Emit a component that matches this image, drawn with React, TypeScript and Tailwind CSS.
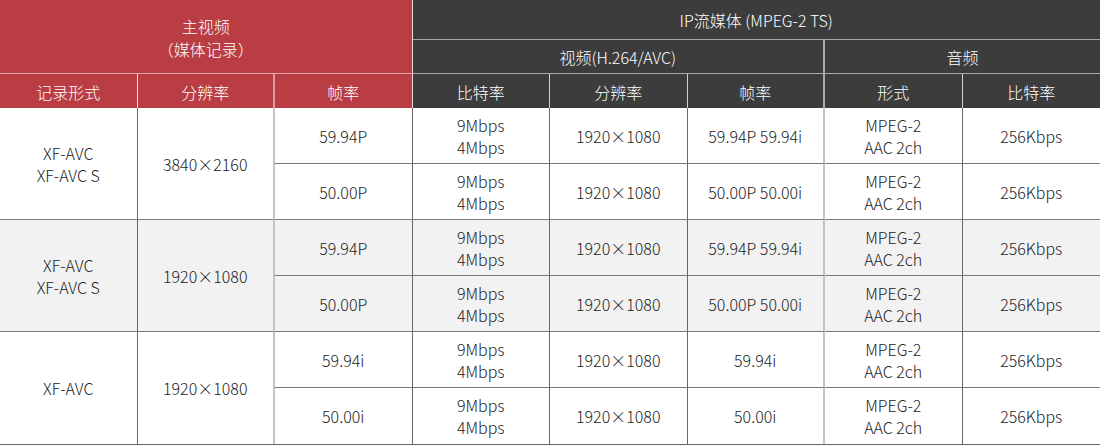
import React from "react";

const RED = "bg-[#b93d43]";
const DARK = "bg-[#3c3c3c]";

type Sub = { fps: string; vfps: string };
type Group = { fmt: string[]; res: string; subs: Sub[]; shaded: boolean };

const GROUPS: Group[] = [
  {
    fmt: ["XF-AVC", "XF-AVC S"],
    res: "3840×2160",
    shaded: false,
    subs: [
      { fps: "59.94P", vfps: "59.94P 59.94i" },
      { fps: "50.00P", vfps: "50.00P 50.00i" },
    ],
  },
  {
    fmt: ["XF-AVC", "XF-AVC S"],
    res: "1920×1080",
    shaded: true,
    subs: [
      { fps: "59.94P", vfps: "59.94P 59.94i" },
      { fps: "50.00P", vfps: "50.00P 50.00i" },
    ],
  },
  {
    fmt: ["XF-AVC"],
    res: "1920×1080",
    shaded: false,
    subs: [
      { fps: "59.94i", vfps: "59.94i" },
      { fps: "50.00i", vfps: "50.00i" },
    ],
  },
];

const cell = "flex flex-col items-center justify-center text-center leading-[22px]";
const head = "flex flex-col items-center justify-center text-center leading-[23px] text-white pt-[2px]";

export default function App() {
  return (
    <div
      className="w-[1100px] h-[446px] bg-white text-[16px] font-light text-[#222]"
      style={{ fontFamily: '"Noto Sans CJK SC", "Noto Sans", sans-serif' }}
    >
      <div className="grid grid-cols-[repeat(8,137.5px)] grid-rows-[40px_34px_34px_repeat(6,56px)] border-b border-[#666]">
        {/* header row 1-2 */}
        <div className={`${head} ${RED} col-span-3 row-span-2 border-b border-r border-b-[#e3a3a6] border-r-[#f3dcdd]`}>
          <span>主视频</span>
          <span>（媒体记录）</span>
        </div>
        <div className={`${head} ${DARK} col-span-5 border-b border-[#a8a8a8]`}>
          IP流媒体 (MPEG-2 TS)
        </div>
        <div className={`${head} ${DARK} col-span-3 border-b border-r-2 border-b-[#a8a8a8] border-r-[#a8a8a8]`}>
          视频(H.264/AVC)
        </div>
        <div className={`${head} ${DARK} col-span-2 border-b border-[#a8a8a8]`}>音频</div>

        {/* header row 3 */}
        <div className={`${head} ${RED} border-r border-[#f3dcdd]`}>记录形式</div>
        <div className={`${head} ${RED} border-r-2 border-[#dd9a9e]`}>分辨率</div>
        <div className={`${head} ${RED} border-r border-[#f3dcdd]`}>帧率</div>
        <div className={`${head} ${DARK} border-r border-[#d0d0d0]`}>比特率</div>
        <div className={`${head} ${DARK} border-r border-[#d0d0d0]`}>分辨率</div>
        <div className={`${head} ${DARK} border-r-2 border-[#a8a8a8]`}>帧率</div>
        <div className={`${head} ${DARK} border-r border-[#d0d0d0]`}>形式</div>
        <div className={`${head} ${DARK}`}>比特率</div>

        {/* body */}
        {GROUPS.map((g, gi) => {
          const bg = g.shaded ? "bg-[#f2f2f2]" : "bg-white";
          const gb = gi < GROUPS.length - 1 ? "border-b border-b-[#7a7a7a]" : "";
          return (
            <React.Fragment key={gi}>
              <div className={`${cell} ${bg} row-span-2 border-r border-r-[#666] ${gb}`}>
                {g.fmt.map((f) => (
                  <span key={f}>{f}</span>
                ))}
              </div>
              <div className={`${cell} ${bg} row-span-2 border-r-2 border-r-[#c4c4c4] ${gb}`}>{g.res}</div>
              {g.subs.map((s, si) => {
                const rb = si === 0 ? "border-b border-b-[#777]" : gb;
                return (
                  <React.Fragment key={si}>
                    <div className={`${cell} ${bg} border-r border-r-[#666] ${rb}`}>{s.fps}</div>
                    <div className={`${cell} ${bg} border-r border-r-[#666] ${rb}`}>
                      <span>9Mbps</span>
                      <span>4Mbps</span>
                    </div>
                    <div className={`${cell} ${bg} border-r border-r-[#666] ${rb}`}>1920×1080</div>
                    <div className={`${cell} ${bg} border-r-2 border-r-[#c4c4c4] ${rb}`}>{s.vfps}</div>
                    <div className={`${cell} ${bg} border-r border-r-[#666] ${rb}`}>
                      <span>MPEG-2</span>
                      <span>AAC 2ch</span>
                    </div>
                    <div className={`${cell} ${bg} ${rb}`}>256Kbps</div>
                  </React.Fragment>
                );
              })}
            </React.Fragment>
          );
        })}
      </div>
    </div>
  );
}
